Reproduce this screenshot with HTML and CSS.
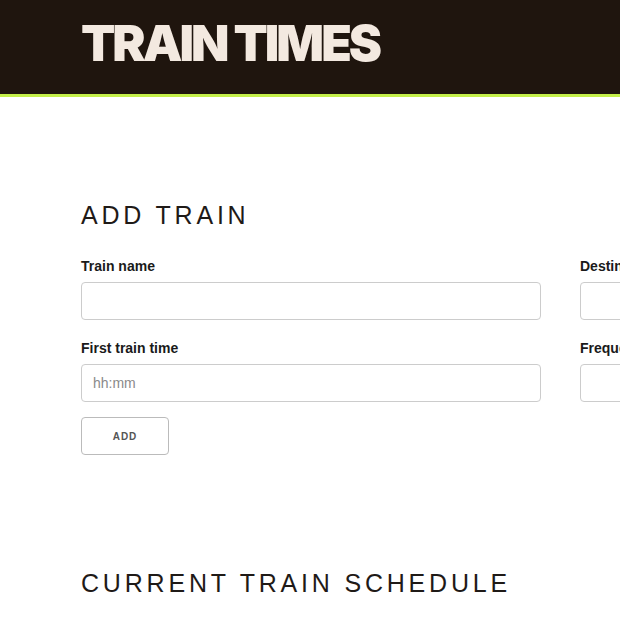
FILE: index.html
```html
<!DOCTYPE html>
<html lang="en">
<head>
<meta charset="utf-8">
<title>Train Times</title>
<link rel="stylesheet" href="styles.css">
</head>
<body>
<header class="site-header">
  <h1 class="brand">TRAIN TIMES</h1>
</header>
<main class="main">
  <section class="add">
    <h2 class="section-title">ADD TRAIN</h2>
    <form class="form">
      <div class="field">
        <label class="label" for="name">Train name</label>
        <input class="input" id="name" type="text">
      </div>
      <div class="field">
        <label class="label" for="dest">Destination</label>
        <input class="input" id="dest" type="text">
      </div>
      <div class="field">
        <label class="label" for="first">First train time</label>
        <input class="input" id="first" type="text" placeholder="hh:mm">
      </div>
      <div class="field">
        <label class="label" for="freq">Frequency (min)</label>
        <input class="input" id="freq" type="text">
      </div>
      <div class="actions">
        <button class="btn" type="button">ADD</button>
      </div>
    </form>
  </section>
  <section class="schedule">
    <h2 class="section-title">CURRENT TRAIN SCHEDULE</h2>
  </section>
</main>
</body>
</html>
```

FILE: styles.css
```css
html, body {
  margin: 0;
  padding: 0;
  background: #ffffff;
  overflow: hidden;
}
body {
  font-family: "Liberation Sans", Arial, sans-serif;
  color: #1f1a17;
}
.site-header {
  background: #1f150e;
  height: 94px;
  border-bottom: 3px solid #c4ef4a;
  padding: 0 0 0 81px;
  display: flex;
  align-items: center;
}
.brand {
  margin: 0;
  font-family: Inter, "Liberation Sans", sans-serif;
  font-weight: 900;
  font-size: 50px;
  line-height: 1;
  letter-spacing: -3px;
  color: #f3e9e0;
  padding-bottom: 8px;
}
.main {
  padding: 103px 0 0 81px;
  width: 1000px;
}
.section-title {
  margin: 0;
  font-weight: 400;
  font-size: 25px;
  line-height: 30px;
  letter-spacing: 3.8px;
  color: #1f1a17;
}
.form {
  margin-top: 26px;
  display: grid;
  grid-template-columns: 460px 460px;
  column-gap: 39px;
  row-gap: 18px;
}
.field {
  display: flex;
  flex-direction: column;
  gap: 6px;
}
.label {
  font-size: 14px;
  line-height: 20px;
  font-weight: 700;
  color: #1a1a1a;
}
.input {
  box-sizing: border-box;
  height: 38px;
  width: 100%;
  border: 1px solid #cccccc;
  border-radius: 4px;
  padding: 0 11px;
  font-family: "Liberation Sans", Arial, sans-serif;
  font-size: 14px;
  color: #333;
  background: #fff;
}
.input::placeholder {
  color: #8a8a8a;
}
.actions {
  grid-column: 1 / -1;
  margin-top: -3px;
}
.btn {
  box-sizing: border-box;
  width: 88px;
  height: 38px;
  border: 1px solid #bbbbbb;
  border-radius: 4px;
  background: #fff;
  font-family: "Liberation Sans", Arial, sans-serif;
  font-weight: 700;
  font-size: 10px;
  letter-spacing: 1px;
  color: #555555;
  padding: 0;
}
.schedule {
  margin-top: 113px;
}
```
